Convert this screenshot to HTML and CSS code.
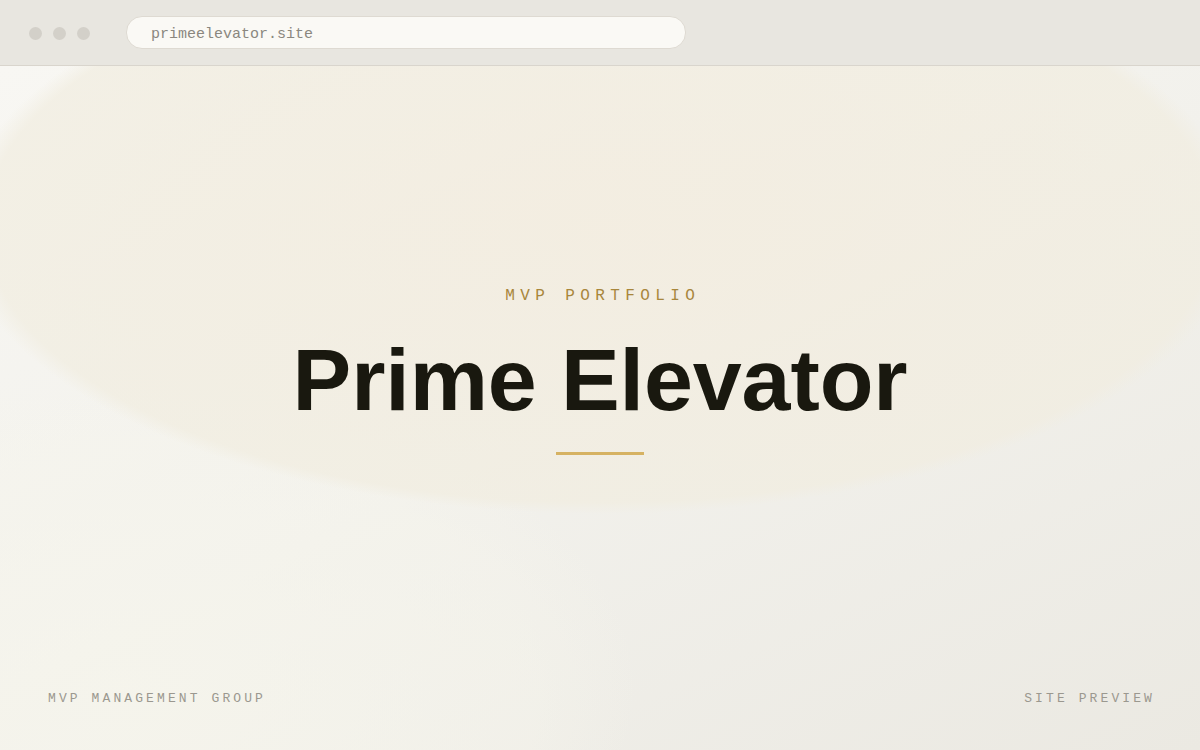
FILE: index.html
```html
<!DOCTYPE html>
<html lang="en">
<head>
<meta charset="utf-8">
<title>Prime Elevator</title>
<link rel="stylesheet" href="styles.css">
</head>
<body>
<div class="window">
  <header class="topbar">
    <div class="dots">
      <span class="dot"></span>
      <span class="dot"></span>
      <span class="dot"></span>
    </div>
    <div class="url">primeelevator.site</div>
  </header>
  <main class="page">
    <section class="hero">
      <div class="eyebrow">MVP PORTFOLIO</div>
      <h1 class="title">Prime Elevator</h1>
      <div class="rule"></div>
    </section>
    <footer class="footer">
      <span class="foot-left">MVP MANAGEMENT GROUP</span>
      <span class="foot-right">SITE PREVIEW</span>
    </footer>
  </main>
</div>
</body>
</html>
```

FILE: styles.css
```css
html, body {
  margin: 0;
  padding: 0;
}
body {
  width: 1200px;
  height: 750px;
  overflow: hidden;
  font-family: "Liberation Sans", Arial, sans-serif;
  background: #f3f2ed;
}
.window {
  display: flex;
  flex-direction: column;
  height: 750px;
}
.topbar {
  height: 65px;
  flex: 0 0 65px;
  background: #e8e6e0;
  border-bottom: 1px solid #d9d5cd;
  display: flex;
  align-items: center;
  padding-left: 29px;
  box-sizing: content-box;
}
.dots {
  display: flex;
  gap: 11px;
  margin-top: 1px;
}
.dot {
  width: 13px;
  height: 13px;
  border-radius: 50%;
  background: #d3d0c9;
}
.url {
  margin-left: 36px;
  width: 534px;
  height: 28px;
  border: 1px solid #dedad2;
  border-radius: 16px;
  background: #faf9f5;
  padding-left: 24px;
  padding-top: 3px;
  display: flex;
  align-items: center;
  font-family: "Liberation Mono", "Courier New", monospace;
  font-size: 15px;
  color: #8a877f;
  box-sizing: content-box;
}
.page {
  flex: 1;
  display: flex;
  flex-direction: column;
  background:
    radial-gradient(ellipse 640px 288px at 600px 160px, rgba(243, 236, 222, 0.8) 0, rgba(241, 237, 224, 0.72) 96%, rgba(241, 237, 224, 0) 100%),
    radial-gradient(ellipse 520px 300px at 120px 620px, rgba(246, 245, 236, 0.8) 0, rgba(246, 245, 236, 0.4) 80%, rgba(246, 245, 236, 0) 100%),
    linear-gradient(155deg, #f8f7f3 0%, #f2f1ec 50%, #ebe9e2 100%);
}
.hero {
  flex: 1;
  display: flex;
  flex-direction: column;
  align-items: center;
  padding-top: 222px;
}
.eyebrow {
  font-family: "Liberation Mono", "Courier New", monospace;
  font-size: 16px;
  line-height: 16px;
  letter-spacing: 5.4px;
  padding-left: 5.4px;
  color: #a8863c;
}
.title {
  margin: 31px 0 0 0;
  font-family: "Liberation Sans", Arial, sans-serif;
  font-weight: 700;
  font-size: 88px;
  line-height: 89px;
  letter-spacing: -0.1px;
  color: #19180f;
}
.rule {
  margin-top: 28px;
  width: 88px;
  height: 3px;
  background: #d6b262;
}
.footer {
  display: flex;
  justify-content: space-between;
  padding: 0 45px 45px 48px;
  font-family: "Liberation Mono", "Courier New", monospace;
  font-size: 13px;
  line-height: 13px;
  letter-spacing: 3.1px;
  color: #9b988f;
}
```
